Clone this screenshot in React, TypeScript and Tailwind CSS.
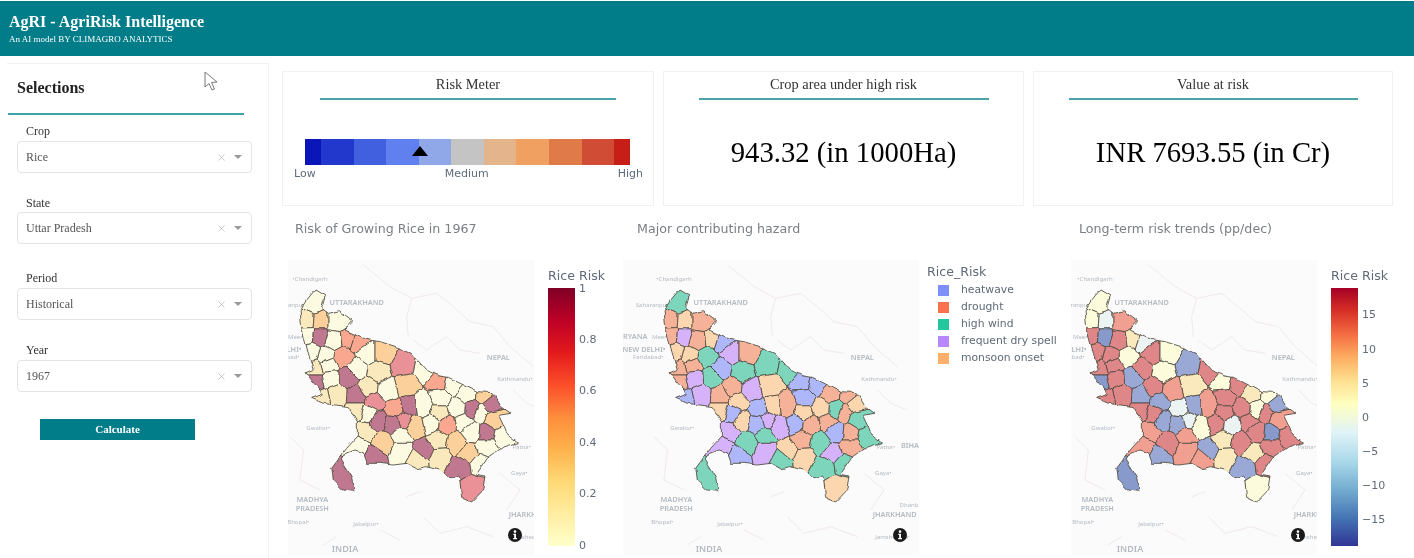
import { X } from "lucide-react";

const serif = "font-['Liberation_Serif',serif]";
const plot = "font-['DejaVu_Sans',sans-serif]";

// state outline, in 3x coordinates of the first map
const outline: [number, number][] = [
  [105, 120], [135, 138], [125, 172], [148, 190], [178, 182], [218, 212], [192, 240], [255, 268], [300, 275], [355, 292],
  [405, 322], [440, 362], [480, 378], [505, 382], [545, 402], [590, 425], [640, 428], [662, 468], [692, 490], [656, 496],
  [672, 530], [682, 555], [712, 578], [668, 592], [622, 625], [590, 672], [615, 678], [608, 722], [575, 756], [545, 742],
  [538, 678], [505, 684], [482, 662], [440, 650], [410, 656], [380, 640], [340, 645], [300, 640], [262, 640], [250, 608],
  [225, 600], [195, 612], [182, 632], [215, 685], [222, 724], [190, 720], [160, 690], [155, 655], [172, 632], [200, 595],
  [232, 560], [232, 515], [205, 470], [130, 460], [95, 445], [130, 432], [102, 400], [78, 368], [100, 358], [85, 310],
  [66, 240], [60, 180], [80, 150],
];

const risk: Record<string, string> = { a: "#fdf9df", b: "#fbe7b8", c: "#fbcb90", d: "#f8a083", e: "#e8848c", f: "#b96a84" };
const hazard: Record<string, string> = { h: "#a5aff8", d: "#f4ab8e", w: "#70d0b6", p: "#d0abf8", m: "#fdd3a6" };
const trend: Record<string, string> = { 1: "#fdfbd8", 2: "#e9f3f2", 3: "#fbe7b8", 4: "#ef9585", 5: "#dc7a7c", 6: "#90a0d2", 7: "#7c90c8" };

// district centre, then its class on each of the three maps
const districts: [number, number, string, string, string][] = [
  [100, 160, "a", "w", "1"], [78, 212, "b", "d", "1"], [118, 215, "c", "m", "2"], [170, 215, "a", "d", "4"],
  [80, 255, "a", "d", "5"], [118, 258, "f", "p", "7"], [162, 270, "a", "d", "5"], [205, 265, "d", "m", "3"],
  [235, 275, "d", "h", "2"], [190, 320, "d", "w", "1"], [135, 320, "a", "m", "5"], [95, 310, "a", "m", "5"],
  [260, 310, "a", "p", "5"], [310, 310, "c", "d", "1"], [370, 345, "e", "w", "6"], [230, 355, "a", "h", "5"],
  [295, 365, "b", "w", "1"], [145, 345, "a", "d", "5"], [105, 355, "b", "d", "5"], [105, 395, "f", "d", "7"],
  [205, 380, "f", "w", "6"], [150, 385, "a", "p", "5"], [380, 405, "c", "m", "3"], [435, 360, "a", "w", "5"],
  [475, 395, "d", "h", "1"], [520, 405, "a", "h", "5"], [320, 420, "a", "p", "4"], [265, 415, "b", "d", "5"],
  [560, 430, "a", "d", "3"], [615, 435, "c", "d", "1"], [480, 445, "a", "h", "5"], [230, 438, "f", "d", "6"],
  [170, 435, "b", "p", "5"], [125, 445, "b", "h", "5"], [283, 455, "e", "m", "6"], [388, 470, "f", "m", "6"],
  [430, 465, "a", "d", "4"], [345, 480, "d", "h", "2"], [575, 478, "f", "w", "1"], [635, 460, "f", "m", "6"],
  [600, 490, "a", "d", "5"], [645, 510, "c", "w", "4"], [480, 490, "b", "m", "5"], [535, 475, "a", "m", "5"],
  [265, 490, "a", "h", "5"], [230, 480, "b", "m", "5"], [295, 510, "f", "m", "6"], [340, 520, "f", "h", "6"],
  [370, 510, "e", "p", "2"], [405, 530, "c", "p", "1"], [455, 520, "a", "h", "5"], [500, 525, "d", "d", "2"],
  [550, 515, "a", "d", "5"], [575, 545, "a", "h", "5"], [620, 550, "f", "d", "7"], [670, 560, "a", "w", "5"],
  [255, 545, "b", "p", "4"], [310, 580, "c", "w", "5"], [235, 590, "a", "p", "4"], [285, 618, "f", "h", "6"],
  [365, 555, "a", "w", "4"], [365, 605, "a", "p", "4"], [435, 600, "f", "m", "6"], [410, 630, "b", "w", "4"],
  [475, 570, "b", "d", "3"], [478, 620, "b", "m", "3"], [530, 580, "c", "w", "5"], [565, 610, "c", "p", "3"],
  [620, 590, "a", "d", "5"], [540, 650, "f", "w", "6"], [600, 640, "a", "w", "5"], [578, 710, "e", "m", "1"],
  [188, 680, "f", "w", "7"],
];

// cell of one district: keep the side of each bisector nearest to it
function cell(i: number) {
  let poly: [number, number][] = [[-200, 0], [1000, 0], [1000, 1000], [-200, 1000]];
  const [ax, ay] = districts[i];
  districts.forEach(([bx, by], j) => {
    if (j === i) return;
    const nx = bx - ax, ny = by - ay;
    const c = (bx * bx + by * by - ax * ax - ay * ay) / 2;
    const next: [number, number][] = [];
    poly.forEach((p, k) => {
      const q = poly[(k + 1) % poly.length];
      const dp = p[0] * nx + p[1] * ny - c;
      const dq = q[0] * nx + q[1] * ny - c;
      if (dp <= 0) next.push(p);
      if (dp < 0 !== dq < 0) {
        const t = dp / (dp - dq);
        next.push([p[0] + (q[0] - p[0]) * t, p[1] + (q[1] - p[1]) * t]);
      }
    });
    poly = next;
  });
  return poly.map((p) => p.join(",")).join(" ");
}
const cells = districts.map((_, i) => cell(i));
const outlinePts = outline.map((p) => p.join(",")).join(" ");

const places: [string, number, number, number?][] = [
  ["•Chandigarh", 90, 94], ["Saharanpur", 25, 170], ["UTTARAKHAND", 230, 165, 22], ["NEPAL", 655, 329, 22],
  ["Kathmandu•", 705, 394], ["HARYANA", -42, 267, 22], ["Meerut", 55, 267], ["NEW DELHI•", 0, 305, 22],
  ["Faridabad•", 13, 326], ["Gwalior•", 115, 541], ["Patna•", 725, 598], ["BIHAR", 805, 595, 22], ["Gaya•", 718, 674],
  ["MADHYA", 97, 755, 22], ["PRADESH", 97, 782, 22], ["Bhopal•", 55, 821], ["Jabalpur•", 258, 829], ["Dhanb", 795, 771],
  ["JHARKHAND", 752, 802, 22], ["INDIA", 195, 906, 27], ["Jamshedpur", 745, 867],
];

const faintLines = [
  "M250 45 L300 85 L330 110 L395 145 L380 200 L385 260",
  "M395 145 L470 130 L520 170 L570 215 L640 230 L690 290 L760 350",
  "M700 420 L740 460 L790 480",
  "M400 270 L440 300 L500 260 L540 300 L600 310",
  "M30 560 L70 600 L60 690 L120 720",
  "M380 740 L420 725 M430 800 L480 850 L560 830 L640 860",
  "M300 840 L360 870 M130 885 L170 860 M660 670 L720 720 L680 780",
];

function StateMap({ id, viewBox, width, colors }: { id: string; viewBox: string; width: number; colors: string[] }) {
  return (
    <div className="relative h-[295px] shrink-0 overflow-hidden bg-[#fbfbfb]" style={{ width }}>
      <svg viewBox={viewBox} width={width} height={295} className="block">
        <defs>
          <clipPath id={`${id}-clip`}>
            <polygon points={outlinePts} />
          </clipPath>
          <filter id={`${id}-wobble`} filterUnits="userSpaceOnUse" x="-100" y="0" width="1000" height="950">
            <feTurbulence type="fractalNoise" baseFrequency="0.035" numOctaves="2" seed="4" result="n" />
            <feDisplacementMap in="SourceGraphic" in2="n" scale="13" xChannelSelector="R" yChannelSelector="G" />
            <feGaussianBlur stdDeviation="0.9" />
          </filter>
        </defs>
        <g fill="none" stroke="#f1eae8" strokeWidth="3">
          {faintLines.map((d) => (
            <path key={d} d={d} />
          ))}
        </g>
        <g fill="#b4bac0" fontFamily="'Noto Sans', sans-serif" textAnchor="middle">
          {places.map(([name, x, y, size]) => (
            <text key={name} x={x} y={y} fontSize={size ?? 18} fontWeight={size ? 600 : 400}>
              {name}
            </text>
          ))}
        </g>
        <g filter={`url(#${id}-wobble)`}>
          <g clipPath={`url(#${id}-clip)`}>
            {cells.map((pts, i) => (
              <polygon key={i} points={pts} fill={colors[i]} fillOpacity={0.9} stroke="#4e4a40" strokeWidth={2.4} strokeLinejoin="round" />
            ))}
          </g>
          <polygon points={outlinePts} fill="none" stroke="#4e4a40" strokeWidth={2.6} strokeLinejoin="round" />
        </g>
      </svg>
      <svg viewBox="0 0 14 14" className="absolute right-[12px] bottom-[13px] h-[14px] w-[14px]">
        <circle cx="7" cy="7" r="7" fill="#1a1a1a" />
        <circle cx="7" cy="3.6" r="1.3" fill="#fff" />
        <path d="M5.3 5.8 H8 V10 H9 V11.2 H5.2 V10 H6.2 V7 H5.3 Z" fill="#fff" />
      </svg>
    </div>
  );
}

function ColorBar({ gradient, ticks }: { gradient: string; ticks: { label: string; mt: string }[] }) {
  return (
    <div className={`${plot} w-[80px] shrink-0 text-[#5f6b78]`}>
      <div className="mt-[8px] h-[20px] text-[12.6px] leading-[16px] whitespace-nowrap">Rice Risk</div>
      <div className="flex">
        <div className={`h-[258px] w-[27px] ${gradient}`} />
        <div className="relative h-[258px] flex-1">
          {ticks.map((t) => (
            <div key={t.label} className={`absolute left-[4px] text-[11px] leading-[12px] ${t.mt}`}>
              {t.label}
            </div>
          ))}
        </div>
      </div>
    </div>
  );
}

const selects = [
  { label: "Crop", value: "Rice", mt: "mt-[9px]", gap: "mt-[3px]" },
  { label: "State", value: "Uttar Pradesh", mt: "mt-[23px]", gap: "mt-[2px]" },
  { label: "Period", value: "Historical", mt: "mt-[27px]", gap: "mt-[3px]" },
  { label: "Year", value: "1967", mt: "mt-[23px]", gap: "mt-[3px]" },
];

const meter = ["#0a16b8", "#2238cc", "#4060e0", "#6080f0", "#90a8e8", "#c4c4c4", "#e4b48c", "#f0a060", "#e07a48", "#d04c34", "#c81e18"];

const hazards = [
  { name: "heatwave", cls: "bg-[#7f8ffa]" },
  { name: "drought", cls: "bg-[#f9714f]" },
  { name: "high wind", cls: "bg-[#22c79c]" },
  { name: "frequent dry spell", cls: "bg-[#b787fb]" },
  { name: "monsoon onset", cls: "bg-[#ffae6b]" },
];

function Card({ title, width, lineW, children }: { title: string; width: string; lineW: string; children: React.ReactNode }) {
  return (
    <div className={`${width} h-[135px] border border-[#f0f1f2]`}>
      <div className={`${serif} pt-[4px] text-center text-[14.4px] leading-[17px] text-[#333]`}>{title}</div>
      <div className={`mx-auto mt-[5px] h-[2px] ${lineW} bg-[#4aa3a6]`} />
      {children}
    </div>
  );
}

export default function App() {
  return (
    <div className="relative h-[558px] w-[1414px] overflow-hidden bg-white blur-[0.3px]">
      {/* Header */}
      <div className={`${serif} mt-[1px] h-[55px] bg-[#007d89] pl-[9px] text-white`}>
        <div className="pt-[11px] text-[16px] leading-[20px] font-bold">AgRI - AgriRisk Intelligence</div>
        <div className="mt-[1px] text-[9px] leading-[12px]">An AI model BY CLIMAGRO ANALYTICS</div>
      </div>

      <div className="flex">
        {/* Selections */}
        <div className="mt-[7px] ml-[7px] h-[495px] w-[262px] shrink-0 border-t border-r border-[#f1f2f3]">
          <div className={`${serif} pt-[14px] pl-[10px] text-[16px] leading-[20px] font-bold text-[#222]`}>Selections</div>
          <div className="mt-[15px] ml-[1px] h-[2px] w-[236px] bg-[#3ea3a8]" />
          {selects.map((s) => (
            <div key={s.label} className={`${serif} ${s.mt} pl-[10px]`}>
              <div className="pl-[9px] text-[12px] leading-[14px] text-[#333]">{s.label}</div>
              <div className={`${s.gap} flex h-[32px] w-[235px] items-center rounded-[4px] border border-[#e2e4e6] pr-[9px] pl-[8px] text-[12px] text-[#555]`}>
                <span className="flex-1">{s.value}</span>
                <X className="mr-[7px] h-[11px] w-[11px] text-[#b5b5b5]" strokeWidth={1.5} />
                <span className="h-0 w-0 border-x-[4px] border-t-[4px] border-x-transparent border-t-[#999]" />
              </div>
            </div>
          ))}
          <div className={`${serif} mt-[27px] ml-[33px] flex h-[21px] w-[155px] items-center justify-center bg-[#007d89] text-[11px] font-bold text-white`}>
            Calculate
          </div>
        </div>

        {/* Main */}
        <div className="ml-[13px] flex-1 pt-[15px]">
          <div className="flex gap-[9px]">
            <Card title="Risk Meter" width="w-[372px]" lineW="w-[296px]">
              <div className="relative mt-[39px] ml-[22px] flex h-[26px] w-[325px]">
                {meter.map((c, i) => (
                  <div
                    key={c}
                    className={i === 0 || i === 10 ? "w-[16px]" : "flex-1"}
                    style={{ backgroundColor: c }}
                  />
                ))}
                <div className="absolute top-[7px] left-[107px] h-0 w-0 border-x-[8px] border-b-[10px] border-x-transparent border-b-black" />
              </div>
              <div className={`${plot} mt-[2px] ml-[11px] flex w-[349px] justify-between text-[11px] leading-[14px] text-[#5f6b78]`}>
                <span>Low</span>
                <span>Medium</span>
                <span>High</span>
              </div>
            </Card>
            <Card title="Crop area under high risk" width="w-[361px]" lineW="w-[290px]">
              <div className={`${serif} mt-[32px] text-center text-[28.7px] leading-[40px] text-black`}>943.32 (in 1000Ha)</div>
            </Card>
            <Card title="Value at risk" width="w-[360px]" lineW="w-[289px]">
              <div className={`${serif} mt-[32px] text-center text-[28.7px] leading-[40px] text-black`}>INR 7693.55 (in Cr)</div>
            </Card>
          </div>

          <div className="mt-[14px] ml-[6px] grid grid-cols-[335px_448px_1fr]">
            <div>
              <div className={`${plot} h-[40px] pl-[7px] text-[12.65px] leading-[17px] text-[#7a7f85]`}>Risk of Growing Rice in 1967</div>
              <div className="flex gap-[14px]">
                <StateMap id="m1" viewBox="24 30 738 885" width={246} colors={districts.map((d) => risk[d[2]])} />
                <ColorBar
                  gradient="bg-[linear-gradient(to_top,#ffffcc,#ffeda0_12.5%,#fed976_25%,#feb24c_37.5%,#fd8d3c_50%,#fc4e2a_62.5%,#e31a1c_75%,#bd0026_87.5%,#800026)]"
                  ticks={[
                    { label: "1", mt: "top-[-5px]" },
                    { label: "0.8", mt: "top-[46px]" },
                    { label: "0.6", mt: "top-[97px]" },
                    { label: "0.4", mt: "top-[149px]" },
                    { label: "0.2", mt: "top-[200px]" },
                    { label: "0", mt: "top-[252px]" },
                  ]}
                />
              </div>
            </div>
            <div>
              <div className={`${plot} h-[40px] pl-[14px] text-[12.65px] leading-[17px] text-[#7a7f85]`}>Major contributing hazard</div>
              <div className="flex gap-[8px]">
                <StateMap id="m2" viewBox="-63 30 888 885" width={296} colors={districts.map((d) => hazard[d[3]])} />
                <div className={`${plot} pt-[4px] text-[#5f6b78]`}>
                  <div className="mb-[2px] text-[12.6px] leading-[16px]">Rice_Risk</div>
                  {hazards.map((h) => (
                    <div key={h.name} className="flex h-[17px] items-center pl-[11px] text-[10.8px] whitespace-nowrap">
                      <span className={`mr-[12px] h-[11px] w-[11px] ${h.cls}`} />
                      {h.name}
                    </div>
                  ))}
                </div>
              </div>
            </div>
            <div>
              <div className={`${plot} h-[40px] pl-[8px] text-[12.65px] leading-[17px] text-[#7a7f85]`}>Long-term risk trends (pp/dec)</div>
              <div className="flex gap-[14px]">
                <StateMap id="m3" viewBox="18 30 738 885" width={246} colors={districts.map((d) => trend[d[4]])} />
                <ColorBar
                  gradient="bg-[linear-gradient(to_top,#313695,#4575b4_11%,#74add1_22%,#abd9e9_33%,#e0f3f8_44%,#ffffbf_55%,#fee090_64%,#fdae61_73%,#f46d43_82%,#d73027_91%,#a50026)]"
                  ticks={[
                    { label: "15", mt: "top-[21px]" },
                    { label: "10", mt: "top-[56px]" },
                    { label: "5", mt: "top-[90px]" },
                    { label: "0", mt: "top-[124px]" },
                    { label: "−5", mt: "top-[158px]" },
                    { label: "−10", mt: "top-[192px]" },
                    { label: "−15", mt: "top-[226px]" },
                  ]}
                />
              </div>
            </div>
          </div>
        </div>
      </div>

      {/* Mouse pointer caught in the capture */}
      <svg viewBox="0 0 16 22" className="absolute top-[71px] left-[204px] h-[22px] w-[16px]">
        <path d="M1 1 L1 16 L5 12.5 L8 19 L10.5 18 L7.5 11.5 L13 11 Z" fill="#fff" stroke="#777" strokeWidth="1" strokeLinejoin="round" />
      </svg>
    </div>
  );
}
